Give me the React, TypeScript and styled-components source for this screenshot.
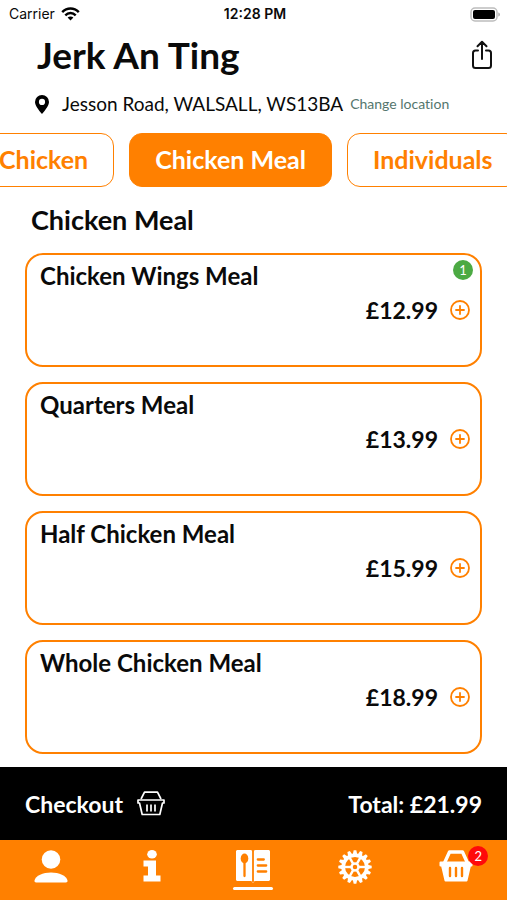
import React from "react";
import styled, { createGlobalStyle } from "styled-components";

const ORANGE = "#ff8000";

const GlobalStyle = createGlobalStyle`
  *, *::before, *::after { box-sizing: border-box; }
  body {
    margin: 0;
    background: #fff;
    color: #0a0a0a;
    font-family: Lato, "Liberation Sans", sans-serif;
    font-variant-ligatures: none;
  }
  button { font: inherit; color: inherit; background: none; border: 0; padding: 0; cursor: pointer; }
  h1, h2, h3, p, ul { margin: 0; padding: 0; }
  svg { display: block; flex: none; }
`;

const Screen = styled.div`
  display: flex;
  flex-direction: column;
  min-height: 100vh;
  overflow: hidden;
`;

const StatusBar = styled.div`
  display: grid;
  grid-template-columns: 1fr auto 1fr;
  align-items: center;
  height: 28px;
  padding: 0 6px 0 9px;
  font: 500 14px/20px Inter, sans-serif;
`;

const Carrier = styled.span`
  display: flex;
  align-items: center;
  gap: 6px;
  font-weight: 400;
`;

const Clock = styled.time`
  font-weight: 600;
`;

const BatterySlot = styled.span`
  justify-self: end;
`;

const Header = styled.header`
  display: flex;
  align-items: center;
  justify-content: space-between;
  height: 56px;
  padding: 0 14px 2px 37px;
`;

const Title = styled.h1`
  font-size: 37px;
  line-height: 44px;
  font-weight: 700;
`;

const Address = styled.div`
  display: flex;
  align-items: center;
  height: 40px;
  padding-left: 35px;
  white-space: nowrap;
`;

const Street = styled.p`
  && { margin: 0 7px 0 13px; }
  font-size: 19px;
  line-height: 24px;
`;

const ChangeLink = styled.a`
  font-size: 14px;
  line-height: 24px;
  color: #54766d;
  text-decoration: none;
`;

const Tabs = styled.nav`
  display: flex;
  flex: none;
  gap: 15px;
  margin: 9px 0 0 -27px;
`;

const Tab = styled.button<{ $active?: boolean }>`
  && {
    flex: none;
    height: 54px;
    padding: 0 25px 2px;
    border: 1px solid ${ORANGE};
    border-radius: 13px;
    background: ${(p) => (p.$active ? ORANGE : "#fff")};
    color: ${(p) => (p.$active ? "#fff" : ORANGE)};
    font-size: 25px;
    line-height: 32px;
    font-weight: 700;
    white-space: nowrap;
  }
`;

const Menu = styled.main`
  flex: 1;
  padding: 17px 25px 12px;
`;

const SectionTitle = styled.h2`
  && { padding-left: 6px; }
  font-size: 27px;
  line-height: 32px;
  font-weight: 700;
`;

const Cards = styled.ul`
  display: flex;
  flex-direction: column;
  gap: 15px;
  && { margin-top: 17px; }
  list-style: none;
`;

const Card = styled.li`
  position: relative;
  min-height: 114px;
  padding: 5px 10px 5px 13px;
  border: 2px solid ${ORANGE};
  border-radius: 18px;
`;

const DishName = styled.h3`
  font-size: 24px;
  line-height: 32px;
  font-weight: 700;
`;

const PriceRow = styled.div`
  display: flex;
  align-items: center;
  justify-content: flex-end;
  gap: 12px;
  font-size: 23px;
  line-height: 36px;
  font-weight: 700;
`;

const Badge = styled.span<{ $color: string }>`
  position: absolute;
  display: grid;
  place-items: center;
  width: 20px;
  height: 20px;
  border-radius: 50%;
  background: ${(p) => p.$color};
  color: #fff;
  font-size: 13px;
  line-height: 20px;
`;

const QuantityBadge = styled(Badge)`
  top: 5px;
  right: 7px;
`;

const BasketBadge = styled(Badge)`
  top: -4px;
  left: 29px;
`;

const CheckoutBar = styled.section`
  display: flex;
  align-items: center;
  justify-content: space-between;
  height: 73px;
  padding: 0 25px;
  background: #000;
  color: #fff;
  font-size: 23px;
  line-height: 32px;
  font-weight: 700;
`;

const CheckoutButton = styled.button`
  display: flex;
  align-items: center;
  gap: 14px;
`;

const BottomNav = styled.nav`
  display: grid;
  grid-template-columns: repeat(5, 1fr);
  height: 60px;
  padding-top: 10px;
  background: ${ORANGE};
  color: #fff;
`;

const NavItem = styled.button`
  display: flex;
  flex-direction: column;
  align-items: center;
  gap: 4px;
`;

const IconHolder = styled.span`
  position: relative;
`;

const ActiveLine = styled.span`
  width: 40px;
  height: 3px;
  border-radius: 2px;
  background: #fff;
`;

const WifiIcon = () => (
  <svg width="19" height="14" viewBox="0 0 19 14" fill="none" stroke="#000" strokeWidth="2.4">
    <path d="M1.2 5.2C6 .3 13 .3 17.8 5.2" />
    <path d="M4.3 8.3C7.3 5.3 11.7 5.3 14.7 8.3" />
    <path d="M9.5 13.5 6.6 10.5C8.2 9 10.8 9 12.4 10.5Z" fill="#000" stroke="none" />
  </svg>
);

const BatteryIcon = () => (
  <svg width="31" height="15" viewBox="0 0 31 15">
    <rect x="1" y="1" width="26" height="13" rx="4" fill="#fff" stroke="#bdbdbd" strokeWidth="1.5" />
    <rect x="3" y="3" width="22" height="9" rx="2" fill="#000" />
    <path d="M28.3 5.5c2.2.7 2.2 3.3 0 4Z" fill="#aaa" />
  </svg>
);

const ShareIcon = () => (
  <svg width="22" height="30" viewBox="0 0 22 30" fill="none" stroke="#111" strokeWidth="2" strokeLinecap="round" strokeLinejoin="round">
    <path d="M7 10.5H4.5A2.5 2.5 0 0 0 2 13v12.5A2.5 2.5 0 0 0 4.5 28h13a2.5 2.5 0 0 0 2.5-2.5V13a2.5 2.5 0 0 0-2.5-2.5H15M11 19V2M6.5 6.2 11 1.7l4.5 4.5" />
  </svg>
);

const PinIcon = () => (
  <svg width="14" height="19" viewBox="0 0 14 19">
    <path fillRule="evenodd" d="M7 0a7 7 0 0 0-7 7c0 3.5 3.5 8 7 12 3.5-4 7-8.5 7-12a7 7 0 0 0-7-7Zm0 3.8a3.1 3.1 0 1 1 0 6.2 3.1 3.1 0 0 1 0-6.2Z" />
  </svg>
);

const PlusIcon = () => (
  <svg width="20" height="20" viewBox="0 0 20 20" fill="none" stroke={ORANGE} strokeWidth="1.8" strokeLinecap="round">
    <circle cx="10" cy="10" r="9" />
    <path d="M10 6v8M6 10h8" />
  </svg>
);

const OutlineBasketIcon = () => (
  <svg width="28" height="25" viewBox="0 0 28 25" fill="none" stroke="#fff" strokeWidth="1.7" strokeLinejoin="round">
    <path d="M4 8 7.5 1.2h13L24 8" />
    <path d="M1 9h26v3h-1.5L22.8 23.5H5.2L2.5 12H1Z" />
    <path d="M10 13.5v7M14 13.5v7M18 13.5v7" />
  </svg>
);

const PersonIcon = () => (
  <svg width="34" height="33" viewBox="0 0 34 33" fill="currentColor">
    <circle cx="17" cy="9.5" r="9.3" />
    <path d="M.5 30.5C1.5 25.5 9 22.5 17 22.5s15.5 3 16.5 8c.2 1.3-.5 2-1.7 2H2.2c-1.2 0-1.9-.7-1.7-2Z" />
  </svg>
);

const InfoIcon = () => (
  <svg width="18" height="33" viewBox="0 0 18 33" fill="currentColor">
    <ellipse cx="9" cy="4.3" rx="4.8" ry="4.3" />
    <path d="M.5 10.5H13v15h4.5v6H.5v-6H5v-9H.5Z" />
  </svg>
);

const MenuIcon = () => (
  <svg width="34" height="33" viewBox="0 0 34 33" fill="currentColor">
    <path d="M1.5 0h13c1 0 2 .8 2.5 2 .5-1.2 1.5-2 2.5-2h13c.8 0 1.5.7 1.5 1.5v28c0 .8-.7 1.5-1.5 1.5h-13c-1 0-1.8.7-2 1.5h-1c-.2-.8-1-1.5-2-1.5h-13C.7 31 0 30.3 0 29.5v-28C0 .7.7 0 1.5 0Z" />
    <path d="M17 1v31" stroke={ORANGE} strokeWidth="1.8" />
    <ellipse cx="8.5" cy="8.5" rx="3.8" ry="5" fill={ORANGE} />
    <path d="M8.5 12v14M21.8 9.5h6M21.8 15.5h8.4M21.8 21.5h8.4" stroke={ORANGE} strokeWidth="2.3" strokeLinecap="round" />
  </svg>
);

const spokes = [0, 60, 120, 180, 240, 300];
const teeth = Array.from({ length: 16 }, (_, i) => i * 22.5);

const GearIcon = () => (
  <svg width="34" height="34" viewBox="-17 -17 34 34" fill="none" stroke="currentColor">
    <circle r="11.8" strokeWidth="3.6" />
    <circle r="3.5" strokeWidth="2.5" />
    {spokes.map((a) => (
      <path key={a} d="M4 0H11" strokeWidth="2.4" transform={`rotate(${a})`} />
    ))}
    {teeth.map((a) => (
      <path key={a} d="M12.5-2.3 16.7-1.3V1.3L12.5 2.3Z" fill="currentColor" stroke="none" transform={`rotate(${a})`} />
    ))}
  </svg>
);

const BasketIcon = () => (
  <svg width="34" height="32" viewBox="0 0 34 32" fill="none" stroke="currentColor" strokeLinejoin="round">
    <path d="M5.5 13 10.5 2h13l5 11" strokeWidth="3.4" />
    <path d="M1.5 12.5h31v3H31L27.5 30.5h-21L3 15.5H1.5Z" fill="currentColor" strokeWidth="2" />
    <path d="M11 18v8M17 18v8M23 18v8" stroke={ORANGE} strokeWidth="2.4" strokeLinecap="round" />
  </svg>
);

const dishes = [
  { name: "Chicken Wings Meal", price: "£12.99", quantity: 1 },
  { name: "Quarters Meal", price: "£13.99", quantity: 0 },
  { name: "Half Chicken Meal", price: "£15.99", quantity: 0 },
  { name: "Whole Chicken Meal", price: "£18.99", quantity: 0 },
];

export default function App() {
  return (
    <Screen>
      <GlobalStyle />
      <StatusBar>
        <Carrier>Carrier <WifiIcon /></Carrier>
        <Clock>12:28 PM</Clock>
        <BatterySlot><BatteryIcon /></BatterySlot>
      </StatusBar>
      <Header>
        <Title>Jerk An Ting</Title>
        <button aria-label="Share"><ShareIcon /></button>
      </Header>
      <Address>
        <PinIcon />
        <Street>Jesson Road, WALSALL, WS13BA</Street>
        <ChangeLink href="#location">Change location</ChangeLink>
      </Address>
      <Tabs aria-label="Menu sections">
        <Tab>Chicken</Tab>
        <Tab $active aria-current="true">Chicken Meal</Tab>
        <Tab>Individuals</Tab>
      </Tabs>
      <Menu>
        <SectionTitle>Chicken Meal</SectionTitle>
        <Cards>
          {dishes.map((dish) => (
            <Card key={dish.name}>
              <DishName>{dish.name}</DishName>
              <PriceRow>
                {dish.price}
                <button aria-label={`Add ${dish.name}`}><PlusIcon /></button>
              </PriceRow>
              {dish.quantity > 0 && <QuantityBadge $color="#4caa43">{dish.quantity}</QuantityBadge>}
            </Card>
          ))}
        </Cards>
      </Menu>
      <CheckoutBar>
        <CheckoutButton>Checkout <OutlineBasketIcon /></CheckoutButton>
        <p>Total: £21.99</p>
      </CheckoutBar>
      <BottomNav aria-label="Main">
        <NavItem aria-label="Account"><PersonIcon /></NavItem>
        <NavItem aria-label="Information"><InfoIcon /></NavItem>
        <NavItem aria-label="Menu" aria-current="page"><MenuIcon /><ActiveLine /></NavItem>
        <NavItem aria-label="Settings"><GearIcon /></NavItem>
        <NavItem aria-label="Basket">
          <IconHolder><BasketIcon /><BasketBadge $color="#ff0a0a">2</BasketBadge></IconHolder>
        </NavItem>
      </BottomNav>
    </Screen>
  );
}
